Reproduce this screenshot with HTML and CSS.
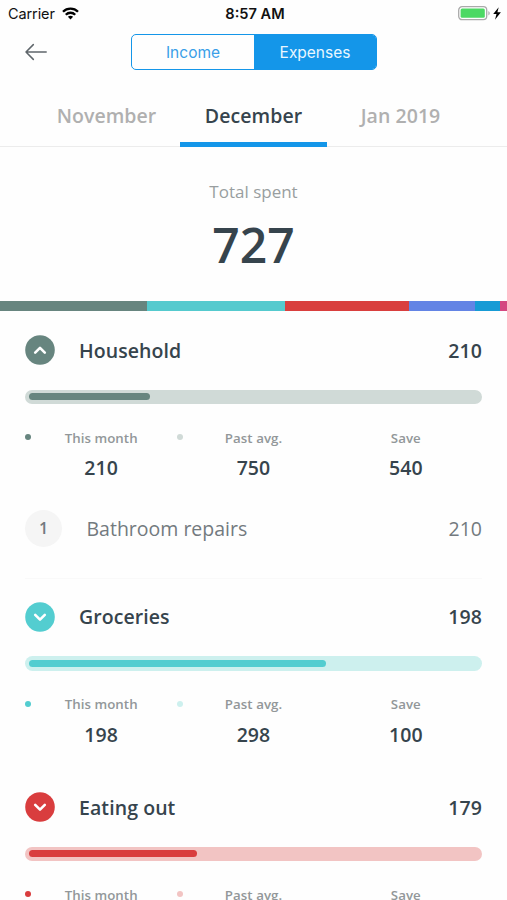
FILE: index.html
```html
<!DOCTYPE html>
<html lang="en">
<head>
<meta charset="utf-8">
<meta name="viewport" content="width=device-width, initial-scale=1">
<title>Expenses</title>
<link rel="stylesheet" href="styles.css">
</head>
<body>
<div class="screen">
  <div class="status">
    <div class="status-left">
      <span class="carrier">Carrier</span>
      <svg class="wifi" width="17" height="13" viewBox="0 0 17 13" fill="none" stroke="#000" stroke-width="2.3">
        <path d="M1 4.7C5.1.6 11.9.6 16 4.7"/>
        <path d="M3.8 7.7c2.6-2.6 6.8-2.6 9.4 0"/>
        <path d="M8.5 12.4 5.9 9.8c1.5-1.3 3.7-1.3 5.2 0z" fill="#000" stroke="none"/>
      </svg>
    </div>
    <span class="clock">8:57 AM</span>
    <div class="status-right">
      <svg width="44" height="15" viewBox="0 0 44 15">
        <rect x=".7" y=".7" width="28" height="13" rx="3.4" fill="#fff" stroke="#aaa" stroke-width="1.3"/>
        <rect x="2.6" y="2.6" width="24.2" height="9.2" rx="1.5" fill="#4cd964"/>
        <path d="M30.4 5c1.8.8 1.8 3.7 0 4.5z" fill="#aaa"/>
        <path d="M40.7 1.2 35.2 8.1h3.3l-1.5 5.6 5.9-7.4h-3.5z" fill="#000"/>
      </svg>
    </div>
  </div>

  <header class="nav">
    <svg class="back" width="22" height="18" viewBox="0 0 22 18" fill="none" stroke="#5f666b" stroke-width="1.5" stroke-linecap="round" stroke-linejoin="round">
      <path d="M21.2 9H1M8.3 1.6 1 9l7.3 7.4"/>
    </svg>
    <div class="segmented">
      <span class="segment">Income</span>
      <span class="segment segment-on">Expenses</span>
    </div>
  </header>

  <nav class="months">
    <span class="month">November</span>
    <span class="month month-on">December</span>
    <span class="month">Jan 2019</span>
  </nav>

  <section class="total">
    <div class="total-label">Total spent</div>
    <div class="total-value">727</div>
  </section>

  <div class="split">
    <i class="household" style="flex-grow:147"></i>
    <i class="groceries" style="flex-grow:138"></i>
    <i class="eating" style="flex-grow:124.3"></i>
    <i class="travel" style="flex-grow:66"></i>
    <i class="bills" style="flex-grow:24.7"></i>
    <i class="gifts" style="flex-grow:7"></i>
  </div>

  <main class="list">
    <section class="category household-theme">
      <div class="head">
        <svg class="toggle" width="30" height="30" viewBox="0 0 30 30"><circle cx="15" cy="15" r="14.8"/><path d="m10.2 17.6 4.8-4.8 4.8 4.8"/></svg>
        <span class="name">Household</span><span class="amount">210</span>
      </div>
      <div class="bar"><div class="fill" style="width:121px"></div></div>
      <div class="stats">
        <div class="stat"><i class="dot"></i><div class="label">This month</div><div class="value">210</div></div>
        <div class="stat"><i class="dot dot-light"></i><div class="label">Past avg.</div><div class="value">750</div></div>
        <div class="stat"><div class="label">Save</div><div class="value">540</div></div>
      </div>
      <div class="item">
        <span class="day">1</span><span class="item-name">Bathroom repairs</span><span class="item-amount">210</span>
      </div>
    </section>

    <section class="category groceries-theme">
      <div class="head">
        <svg class="toggle" width="30" height="30" viewBox="0 0 30 30"><circle cx="15" cy="15" r="14.8"/><path d="m10.2 12.8 4.8 4.8 4.8-4.8"/></svg>
        <span class="name">Groceries</span><span class="amount">198</span>
      </div>
      <div class="bar"><div class="fill" style="width:296.5px"></div></div>
      <div class="stats">
        <div class="stat"><i class="dot"></i><div class="label">This month</div><div class="value">198</div></div>
        <div class="stat"><i class="dot dot-light"></i><div class="label">Past avg.</div><div class="value">298</div></div>
        <div class="stat"><div class="label">Save</div><div class="value">100</div></div>
      </div>
    </section>

    <section class="category eating-theme">
      <div class="head">
        <svg class="toggle" width="30" height="30" viewBox="0 0 30 30"><circle cx="15" cy="15" r="14.8"/><path d="m10.2 12.8 4.8 4.8 4.8-4.8"/></svg>
        <span class="name">Eating out</span><span class="amount">179</span>
      </div>
      <div class="bar"><div class="fill" style="width:168px"></div></div>
      <div class="stats">
        <div class="stat"><i class="dot"></i><div class="label">This month</div></div>
        <div class="stat"><i class="dot dot-light"></i><div class="label">Past avg.</div></div>
        <div class="stat"><div class="label">Save</div></div>
      </div>
    </section>
  </main>
</div>
</body>
</html>
```
FILE: styles.css
```css
* { box-sizing: border-box; }
body { margin: 0; background: #fff; }
.screen {
  width: 507px;
  height: 900px;
  overflow: hidden;
  background: #fefefe;
  font-family: "Open Sans", "Noto Sans", sans-serif;
  color: #36444d;
}

.status {
  display: grid;
  grid-template-columns: 1fr auto 1fr;
  align-items: center;
  height: 27px;
  padding: 0 5px 0 8px;
  font-family: Inter, sans-serif;
  font-size: 14.5px;
  color: #111;
}
.status-left { display: flex; align-items: center; gap: 7px; }
.carrier { letter-spacing: -.1px; }
.clock { font-weight: 600; font-size: 14.6px; }
.status-right { display: flex; justify-content: flex-end; }

.nav { display: flex; align-items: center; height: 51px; padding-left: 25px; }
.back { flex: none; margin-top: -1px; }
.segmented {
  display: flex;
  width: 246px;
  height: 36px;
  margin-left: 84px;
  margin-top: -1px;
  border: 1.5px solid #1496e9;
  border-radius: 5px;
  overflow: hidden;
  font-family: Inter, sans-serif;
  font-size: 15.5px;
}
.segment {
  flex: 1;
  display: flex;
  align-items: center;
  justify-content: center;
  color: #3a9fe8;
}
.segment-on { background: #1496e9; color: #e9f6ff; }

.months {
  display: grid;
  grid-template-columns: repeat(3, 147px);
  justify-content: center;
  height: 69px;
  border-bottom: 1px solid #ececec;
}
.month {
  height: 68.5px;
  padding-top: 24px;
  text-align: center;
  font-size: 19.5px;
  line-height: 28px;
  font-weight: 550;
  letter-spacing: .06px;
  color: #b0b0b0;
}
.month-on {
  color: #36444d;
  border-bottom: 5px solid #1496e9;
}

.total { height: 154px; padding-top: 33px; text-align: center; }
.total-label { font-size: 17px; line-height: 24px; color: #999ea0; }
.total-value { margin-top: 9px; font-size: 48px; line-height: 64px; font-weight: 560; }

.split { display: flex; height: 10px; }
.split i { flex: 0 0 0; }
.household { background: #67857f; }
.groceries { background: #55cace; }
.eating { background: #d93f3e; }
.travel { background: #6384e5; }
.bills { background: #179bd5; }
.gifts { background: #d54881; }

.household-theme { --main: #67857f; --light: #d0dad7; }
.groceries-theme { --main: #53cdd0; --light: #cdf0ee; }
.eating-theme { --main: #d93d3e; --light: #f2c4c3; }

.list { padding: 24px 25px 0; }
.category { height: 190.5px; }
.household-theme { height: 266.5px; }
.head { display: flex; align-items: center; height: 30px; font-size: 19.5px; line-height: 30px; font-weight: 550; letter-spacing: .08px; }
.name, .amount { padding-top: 1px; }
.toggle { margin-right: 24px; fill: var(--main); }
.toggle path { fill: none; stroke: #fff; stroke-width: 2.6; stroke-linecap: round; stroke-linejoin: round; }
.amount, .item-amount { margin-left: auto; }
.bar { height: 14.5px; margin-top: 24.5px; padding: 3.7px 4px; border-radius: 8px; background: var(--light); }
.fill { height: 7.2px; border-radius: 4px; background: var(--main); }

.stats { display: grid; grid-template-columns: repeat(3, 1fr); margin-top: 24px; }
.stat { position: relative; text-align: center; }
.dot { position: absolute; left: 0; top: 6px; width: 6px; height: 6px; border-radius: 50%; background: var(--main); }
.dot-light { background: var(--light); }
.label { font-size: 13.3px; line-height: 20px; margin-top: -.5px; font-weight: 550; letter-spacing: .04px; color: #929799; }
.value { margin-top: 6.5px; font-size: 19.5px; line-height: 28px; font-weight: 550; letter-spacing: .08px; }

.item { display: flex; align-items: center; height: 98.5px; margin-top: -2px; border-bottom: 1px solid #f9f9f9; font-size: 19.5px; line-height: 26px; color: #737a7e; }
.day {
  width: 37px;
  height: 37px;
  margin-right: 24.5px;
  border-radius: 50%;
  background: #f5f5f5;
  font-size: 16px;
  line-height: 37px;
  text-align: center;
  font-weight: 550;
}
```
